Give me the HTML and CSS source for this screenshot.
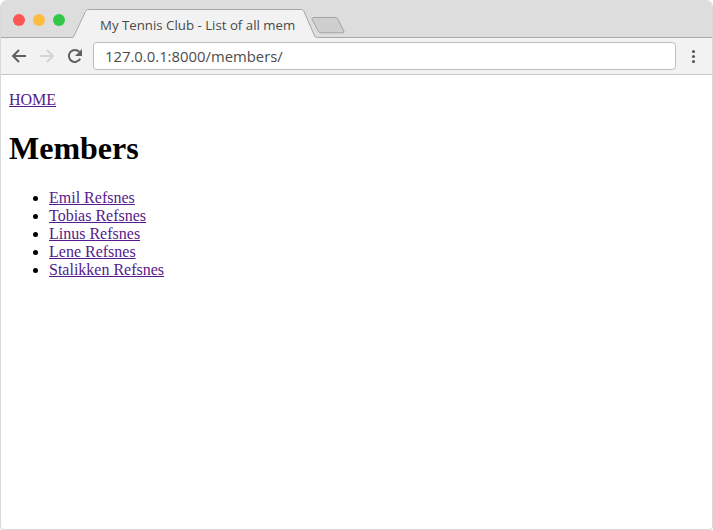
FILE: index.html
```
<!DOCTYPE html>
<html lang="en">
<head>
<meta charset="utf-8">
<title>My Tennis Club - List of all members</title>
<link rel="stylesheet" href="styles.css">
</head>
<body>
<div class="window">
  <header class="tabstrip">
    <div class="lights">
      <span class="light red"></span>
      <span class="light yellow"></span>
      <span class="light green"></span>
    </div>
    <div class="tab">
      <svg class="tab-shape" width="244" height="29" viewBox="0 0 244 29">
        <path d="M0 28 L.5 28 L12.500 2.500 C13.200 1 14.200 .5 15.500 .5 L228 .5 C229.300 .5 230.300 1 231 2.500 L242 28 L244 28 L244 29 L0 29 Z" fill="#f2f2f2"/>
        <path d="M0 28 L.5 28 L12.500 2.500 C13.200 1 14.200 .5 15.500 .5 L228 .5 C229.300 .5 230.300 1 231 2.500 L242 28 L244 28" fill="none" stroke="#a8a8a8"/>
      </svg>
      <span class="tab-title">My Tennis Club - List of all mem</span>
    </div>
    <svg class="newtab" width="34" height="17" viewBox="0 0 34 17">
      <path d="M3 .5 L24 .5 C25.500 .5 26.200 1 26.800 2.200 L32.800 14 C33.300 15.200 32.800 15.800 31.500 15.800 L10 15.800 C8.800 15.800 8 15.300 7.400 14.200 L1.200 2.400 C.7 1.200 1.500 .5 3 .5 Z" fill="#cfcfcf" stroke="#a3a3a3"/>
    </svg>
  </header>
  <nav class="toolbar">
    <svg class="nav-icon" width="16" height="16" viewBox="0 0 16 16"><path d="M15 8 H2 M8 2 L2 8 L8 14" fill="none" stroke="#616161" stroke-width="2"/></svg>
    <svg class="nav-icon" width="16" height="16" viewBox="0 0 16 16"><path d="M1 8 H14 M8 2 L14 8 L8 14" fill="none" stroke="#d3d3d3" stroke-width="2"/></svg>
    <svg class="nav-icon" width="16" height="16" viewBox="0 0 16 16"><path d="M13.200 10.800 A6 6 0 1 1 12.400 3.900" fill="none" stroke="#616161" stroke-width="2"/><path d="M15 1 V8 H8 Z" fill="#616161"/></svg>
    <div class="address">127.0.0.1:8000/members/</div>
    <div class="menu"><span class="dot"></span><span class="dot"></span><span class="dot"></span></div>
  </nav>
  <main class="page">
    <p class="home-line"><a class="link" href="#">HOME</a></p>
    <h1 class="title">Members</h1>
    <ul class="members">
      <li><a class="link" href="#">Emil Refsnes</a></li>
      <li><a class="link" href="#">Tobias Refsnes</a></li>
      <li><a class="link" href="#">Linus Refsnes</a></li>
      <li><a class="link" href="#">Lene Refsnes</a></li>
      <li><a class="link" href="#">Stalikken Refsnes</a></li>
    </ul>
  </main>
</div>
</body>
</html>
```
FILE: styles.css
```
* { box-sizing: border-box; }
html, body { margin: 0; padding: 0; height: 100%; background: #fff; }
.window {
  height: 530px;
  display: flex;
  flex-direction: column;
  border: 1px solid #d9d9d9;
  border-top: 0;
  border-radius: 7px 7px 4px 4px;
  overflow: hidden;
}
.tabstrip {
  height: 38px;
  flex: none;
  display: flex;
  align-items: flex-end;
  background: #dddddd;
  border-bottom: 1px solid #a8a8a8;
  position: relative;
}
.lights {
  display: flex;
  gap: 8px;
  padding: 0 0 11px 12px;
  width: 72px;
  flex: none;
}
.light { width: 12px; height: 12px; border-radius: 50%; }
.red { background: #fc5753; }
.yellow { background: #fdbc40; }
.green { background: #33c748; }
.tab {
  width: 244px;
  height: 29px;
  flex: none;
  position: relative;
  margin-bottom: -1px;
}
.tab-shape { position: absolute; left: 0; top: 0; }
.tab-title {
  position: relative;
  display: block;
  padding: 7px 0 0 27px;
  font: 13.25px/18px "Open Sans", "Noto Sans", sans-serif;
  color: #4a4a4a;
  white-space: nowrap;
}
.newtab { flex: none; margin: 0 0 3px -6px; }
.toolbar {
  height: 37px;
  flex: none;
  display: flex;
  align-items: center;
  gap: 12px;
  padding: 0 11px 0 10px;
  background: #f2f2f2;
  border-bottom: 1px solid #c8c8c8;
}
.address {
  flex: 1;
  height: 28px;
  margin-left: -2px;
  padding-left: 11px;
  background: #fff;
  border: 1px solid #bdbdbd;
  border-radius: 4px;
  font: 14.85px/26px "Open Sans", "Noto Sans", sans-serif;
  color: #4d4d4d;
}
.menu {
  display: flex;
  flex-direction: column;
  gap: 2px;
  padding: 0 6px 0 4px;
}
.dot { width: 3px; height: 3px; border-radius: 50%; background: #555; }
.page {
  flex: 1;
  padding: 8px;
  font: 16px/18px "Liberation Serif", "Times New Roman", serif;
  color: #000;
}
.home-line { margin: 8px 0 16px; }
.link { color: #551a8b; text-decoration: underline; }
.title {
  margin: 21px 0 22px;
  font: bold 32px/37px "Liberation Serif", "Times New Roman", serif;
}
.members { margin: 0; padding-left: 40px; }
```
